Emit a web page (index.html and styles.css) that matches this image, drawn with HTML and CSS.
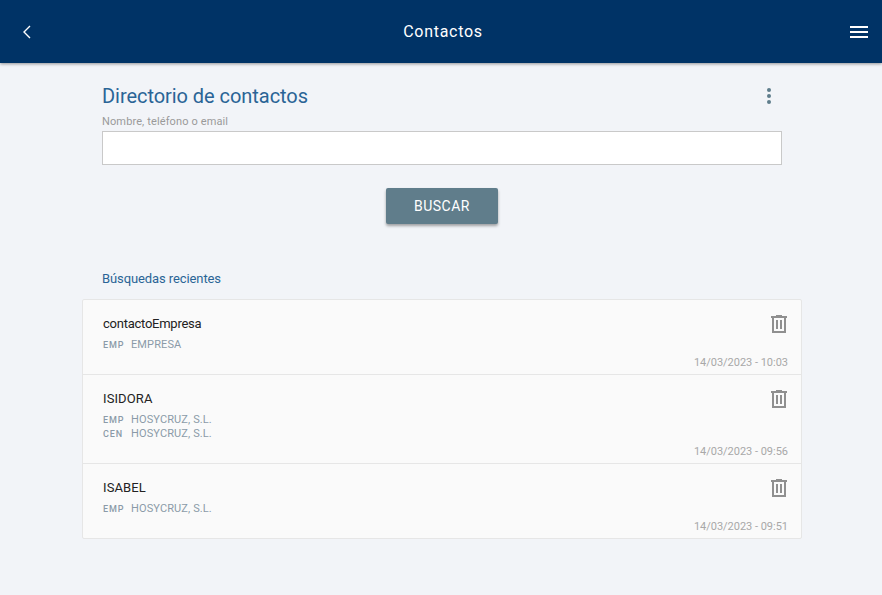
FILE: index.html
```html
<!DOCTYPE html>
<html lang="es">
<head>
<meta charset="utf-8">
<title>Contactos</title>
<link rel="stylesheet" href="styles.css">
</head>
<body>
<header class="topbar">
  <button class="icon-btn" aria-label="Volver">
    <svg width="10" height="14" viewBox="0 0 10 14"><path d="M8 1 2 7l6 6" fill="none" stroke="#fff" stroke-width="1.4"/></svg>
  </button>
  <h1 class="topbar-title">Contactos</h1>
  <button class="icon-btn" aria-label="Menú">
    <svg width="18" height="12" viewBox="0 0 18 12"><path d="M0 0h18v2H0zM0 5h18v2H0zM0 10h18v2H0z" fill="#fff"/></svg>
  </button>
</header>
<main class="content">
  <section class="search">
    <div class="search-head">
      <h2 class="search-title">Directorio de contactos</h2>
      <svg class="more" width="4" height="16" viewBox="0 0 4 16"><g fill="#5f7d8c"><circle cx="2" cy="2" r="2"/><circle cx="2" cy="8" r="2"/><circle cx="2" cy="14" r="2"/></g></svg>
    </div>
    <label class="field-label" for="q">Nombre, teléfono o email</label>
    <input class="field" id="q" type="text">
    <div class="actions"><button class="primary">BUSCAR</button></div>
    <h3 class="recent-title">Búsquedas recientes</h3>
  </section>
  <ul class="card">
    <li class="row">
      <div class="row-main">
        <div class="name name-mixed">contactoEmpresa</div>
        <div class="meta"><span class="tag">EMP</span><span>EMPRESA</span></div>
      </div>
      <svg class="trash" width="16" height="18" viewBox="0 0 16 18"><path d="M0 1h5V0h6v1h5v2h-1v15H1V3H0zM3 3v13h10V3zM5 5h2v9H5zM9 5h2v9H9z" fill="#8f8f8f" fill-rule="evenodd"/></svg>
      <div class="date">14/03/2023 - 10:03</div>
    </li>
    <li class="row">
      <div class="row-main">
        <div class="name">ISIDORA</div>
        <div class="meta"><span class="tag">EMP</span><span>HOSYCRUZ, S.L.</span></div>
        <div class="meta"><span class="tag">CEN</span><span>HOSYCRUZ, S.L.</span></div>
      </div>
      <svg class="trash" width="16" height="18" viewBox="0 0 16 18"><path d="M0 1h5V0h6v1h5v2h-1v15H1V3H0zM3 3v13h10V3zM5 5h2v9H5zM9 5h2v9H9z" fill="#8f8f8f" fill-rule="evenodd"/></svg>
      <div class="date">14/03/2023 - 09:56</div>
    </li>
    <li class="row">
      <div class="row-main">
        <div class="name">ISABEL</div>
        <div class="meta"><span class="tag">EMP</span><span>HOSYCRUZ, S.L.</span></div>
      </div>
      <svg class="trash" width="16" height="18" viewBox="0 0 16 18"><path d="M0 1h5V0h6v1h5v2h-1v15H1V3H0zM3 3v13h10V3zM5 5h2v9H5zM9 5h2v9H9z" fill="#8f8f8f" fill-rule="evenodd"/></svg>
      <div class="date">14/03/2023 - 09:51</div>
    </li>
  </ul>
</main>
</body>
</html>
```
FILE: styles.css
```css
* { box-sizing: border-box; }
html, body { margin: 0; height: 100%; overflow: hidden; }
body { background: #f2f4f8; font-family: Roboto, sans-serif; color: #222; }
h1, h2, h3, ul { margin: 0; padding: 0; font-weight: 400; list-style: none; }
button { font-family: inherit; border: 0; background: none; padding: 0; }

.topbar {
  height: 63px;
  background: #003366;
  box-shadow: 0 1px 3px rgba(0, 0, 0, .4);
  display: flex;
  align-items: center;
  justify-content: space-between;
  padding: 0 14px 0 22px;
}
.icon-btn { display: flex; min-width: 14px; }
.topbar-title { color: #fff; font-size: 16px; letter-spacing: .73px; }

.content { padding: 0 80px 0 82px; }
.search { padding: 21px 20px 0; }
.search-head { display: flex; justify-content: space-between; align-items: center; height: 23px; padding-right: 11px; }
.search-title { font-size: 20px; color: #2a6496; letter-spacing: -.05px; }
.field-label { display: block; margin-top: 8px; height: 13px; line-height: 13px; font-size: 11px; letter-spacing: .12px; color: #9a9a9a; }
.field { display: block; width: 100%; height: 34px; margin-top: 3px; background: #fff; border: 1px solid #c9c9c9; }
.actions { display: flex; justify-content: center; margin-top: 23px; }
.primary {
  width: 112px; height: 36px;
  background: #607d8b; color: #fff;
  font-size: 14px; letter-spacing: .5px;
  border-radius: 2px;
  box-shadow: 0 2px 3px rgba(0, 0, 0, .35);
}
.recent-title { margin-top: 47px; font-size: 13px; line-height: 16px; letter-spacing: -.1px; color: #2a6496; }

.card { margin-top: 12px; background: #fafafa; border: 1px solid #e6e6e6; border-radius: 2px; }
.row {
  display: grid;
  grid-template-columns: 1fr auto;
  padding: 14px 13px 4px 20px;
}
.row + .row { border-top: 1px solid #e6e6e6; }
.row-main { grid-column: 1; }
.name { font-size: 13px; line-height: 20px; letter-spacing: .1px; color: #222; margin-bottom: 4px; }
.name-mixed { letter-spacing: -.25px; }
.meta { display: flex; font-size: 11px; line-height: 14px; color: #8b9aa8; letter-spacing: .12px; }
.tag { width: 28px; font-size: 9px; font-weight: 500; letter-spacing: .9px; }
.trash { grid-column: 2; grid-row: 1; justify-self: end; margin-right: 1px; margin-top: 1px; }
.date { grid-column: 1 / 3; justify-self: end; font-size: 11px; line-height: 14px; letter-spacing: -.02px; color: #a8a8a8; margin-top: 4px; }
```
